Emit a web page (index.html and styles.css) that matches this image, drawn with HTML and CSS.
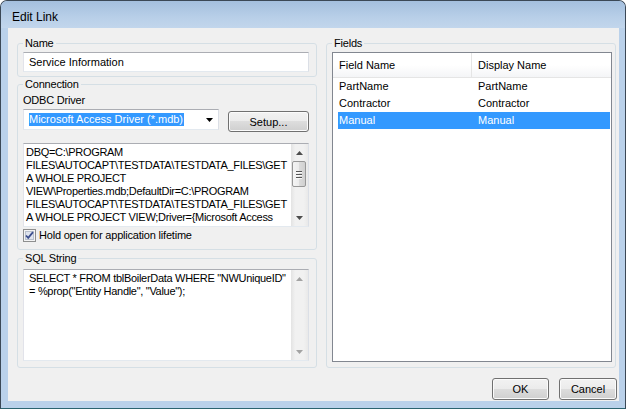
FILE: index.html
```html
<!DOCTYPE html>
<html lang="en">
<head>
    <meta charset="UTF-8">
    <title>Edit Link</title>
    <link rel="stylesheet" href="styles.css">
</head>
<body>
    <div class="window">
        <div class="titlebar">Edit Link</div>

        <div class="client">
            <div class="main">
                <div class="left">
                    <fieldset class="group group-name">
                        <legend>Name</legend>
                        <div class="textbox">Service Information</div>
                    </fieldset>

                    <fieldset class="group group-conn">
                        <legend>Connection</legend>
                        <div class="label">ODBC Driver</div>
                        <div class="driver-row">
                            <div class="combo">
                                <span class="combo-value">Microsoft Access Driver (*.mdb)</span>
                                <svg class="combo-arrow" width="7" height="4" viewBox="0 0 7 4"><path d="M0 0h7L3.5 4z" fill="#000"/></svg>
                            </div>
                            <button class="btn btn-setup">Setup...</button>
                        </div>
                        <div class="memo memo-conn">
                            <div class="memo-text">DBQ=C:\PROGRAM
FILES\AUTOCAPT\TESTDATA\TESTDATA_FILES\GET
A WHOLE PROJECT
VIEW\Properties.mdb;DefaultDir=C:\PROGRAM
FILES\AUTOCAPT\TESTDATA\TESTDATA_FILES\GET
A WHOLE PROJECT VIEW;Driver={Microsoft Access</div>
                            <div class="vscroll">
                                <div class="sb-btn"><svg width="7" height="4" viewBox="0 0 7 4"><path d="M3.5 0L7 4H0z" fill="#4d4d4d"/></svg></div>
                                <div class="sb-thumb"><span></span><span></span><span></span></div>
                                <div class="sb-track"></div>
                                <div class="sb-btn"><svg width="7" height="4" viewBox="0 0 7 4"><path d="M0 0h7L3.5 4z" fill="#4d4d4d"/></svg></div>
                            </div>
                        </div>
                        <label class="check">
                            <svg class="check-box" width="13" height="13" viewBox="0 0 13 13">
                                <rect x="0.5" y="0.5" width="12" height="12" fill="#f4f4f4" stroke="#8e8f8f"/>
                                <rect x="2.5" y="2.5" width="8" height="8" fill="#dfe4ee" stroke="#b8c0cc"/>
                                <path d="M3 6.5l2.2 2.4L10 3.2" fill="none" stroke="#3d4f8e" stroke-width="1.8"/>
                            </svg>
                            <span>Hold open for application lifetime</span>
                        </label>
                    </fieldset>

                    <fieldset class="group group-sql">
                        <legend>SQL String</legend>
                        <div class="memo memo-sql">
                            <div class="memo-text">SELECT * FROM tblBoilerData WHERE "NWUniqueID"
= %prop("Entity Handle", "Value");</div>
                            <div class="vscroll">
                                <div class="sb-btn"><svg width="7" height="4" viewBox="0 0 7 4"><path d="M3.5 0L7 4H0z" fill="#a3a3a3"/></svg></div>
                                <div class="sb-track"></div>
                                <div class="sb-btn"><svg width="7" height="4" viewBox="0 0 7 4"><path d="M0 0h7L3.5 4z" fill="#a3a3a3"/></svg></div>
                            </div>
                        </div>
                    </fieldset>
                </div>

                <div class="right">
                    <fieldset class="group group-fields">
                        <legend>Fields</legend>
                        <div class="listview">
                            <div class="lv-header">
                                <div class="lv-head lv-head-first">Field Name</div>
                                <div class="lv-head">Display Name</div>
                            </div>
                            <div class="lv-row">
                                <div class="lv-cell lv-cell-first">PartName</div>
                                <div class="lv-cell">PartName</div>
                            </div>
                            <div class="lv-row">
                                <div class="lv-cell lv-cell-first">Contractor</div>
                                <div class="lv-cell">Contractor</div>
                            </div>
                            <div class="lv-row selected">
                                <div class="lv-cell lv-cell-first">Manual</div>
                                <div class="lv-cell">Manual</div>
                            </div>
                        </div>
                    </fieldset>
                </div>
            </div>

            <div class="footer">
                <button class="btn btn-ok">OK</button>
                <button class="btn btn-cancel">Cancel</button>
            </div>
        </div>
    </div>
</body>
</html>
```

FILE: styles.css
```css
* {
    margin: 0;
    padding: 0;
    box-sizing: border-box;
    font-family: "Liberation Sans", Arial, sans-serif;
}

body {
    background-color: #ffffff;
    color: #000000;
    font-size: 11px;
}

.window {
    width: 626px;
    height: 409px;
    display: flex;
    flex-direction: column;
    border: 1px solid #3b4856;
    border-bottom-color: #2c6470;
    border-radius: 7px 7px 0 0;
    background-color: #bad1ea;
    overflow: hidden;
}

.titlebar {
    height: 27px;
    padding: 9px 0 0 11px;
    font-size: 12px;
    line-height: 14px;
    color: #000;
    background: linear-gradient(#a4bfde, #b8cfe8 60%, #c2d6ec);
}

.client {
    flex: 1;
    display: flex;
    flex-direction: column;
    margin: 0 6px 7px 7px;
    background-color: #f0f0f0;
}

.main {
    display: flex;
    gap: 9px;
    padding: 9px 0 0 9px;
}

.left {
    width: 300px;
    display: flex;
    flex-direction: column;
}

.right {
    width: 290px;
    display: flex;
    flex-direction: column;
}

/* group boxes */
.group {
    border: 1px solid #d5dfe5;
    border-radius: 3px;
    padding: 2px 7px 4px 5px;
    min-width: 0;
}

.group legend {
    padding: 0 2px;
    font-size: 11px;
    line-height: 13px;
    letter-spacing: -0.2px;
}

.group-conn {
    margin-top: 1px;
    padding: 3px 7px 7px 5px;
}

.group-sql {
    margin-top: 2px;
    padding: 4px 7px 6px 5px;
}

.group-fields {
    flex: 1;
    padding: 2px 3px 5px 5px;
}

.label {
    line-height: 13px;
    letter-spacing: -0.2px;
}

.textbox {
    height: 20px;
    padding-left: 5px;
    line-height: 18px;
    background: #fff;
    border: 1px solid;
    border-color: #abadb3 #dbdfe6 #e3e9ef #e2e3ea;
}

/* driver row */
.driver-row {
    display: flex;
    align-items: flex-start;
    gap: 9px;
    margin-top: 2px;
}

.combo {
    width: 196px;
    height: 21px;
    display: flex;
    align-items: center;
    justify-content: space-between;
    padding: 0 5px 0 5px;
    background: #fff;
    border: 1px solid;
    border-color: #abadb3 #dbdfe6 #e3e9ef #e2e3ea;
}

.combo-value {
    padding: 0 1px 0 0;
    line-height: 13px;
    color: #fff;
    background-color: #3399ff;
}

.btn {
    height: 22px;
    font-size: 11px;
    color: #000;
    border: 1px solid #707070;
    border-radius: 3px;
    background: linear-gradient(#f2f2f2, #ebebeb 50%, #dddddd 50%, #cfcfcf);
    box-shadow: inset 0 0 0 1px #fbfbfb;
}

.btn-setup {
    width: 81px;
    height: 21px;
    margin-top: 2px;
}

/* multi-line text boxes */
.memo {
    display: flex;
    background: #fff;
    border: 1px solid;
    border-color: #abadb3 #dbdfe6 #e3e9ef #e2e3ea;
    overflow: hidden;
}

.memo-conn {
    height: 84px;
    margin-top: 11px;
}

.memo-sql {
    height: 92px;
}

.memo-text {
    flex: 1;
    white-space: pre;
    overflow: hidden;
    line-height: 13px;
    letter-spacing: -0.3px;
}

.memo-conn .memo-text {
    padding: 2px 0 0 2px;
}

.memo-sql .memo-text {
    padding: 2px 0 0 5px;
}

.vscroll {
    width: 17px;
    display: flex;
    flex-direction: column;
    background: linear-gradient(to right, #e3e3e3, #f1f1f1 25%, #f1f1f1 75%, #e9e9e9);
}

.sb-btn {
    height: 17px;
    display: flex;
    align-items: center;
    justify-content: center;
}

.sb-thumb {
    height: 26px;
    margin: 0 2px 0 1px;
    display: flex;
    flex-direction: column;
    align-items: center;
    justify-content: center;
    gap: 2px;
    border: 1px solid #979797;
    border-radius: 2px;
    background: linear-gradient(to right, #f4f4f4, #ececec 50%, #dcdcdc 50%, #d0d0d0);
}

.sb-thumb span {
    width: 6px;
    height: 1px;
    background-color: #555;
    box-shadow: 0 1px 0 #f8f8f8;
}

.sb-track {
    flex: 1;
}

.check {
    display: flex;
    align-items: center;
    gap: 3px;
    margin-top: 2px;
    height: 13px;
    line-height: 13px;
    letter-spacing: -0.2px;
}

/* list view */
.listview {
    height: 310px;
    background: #fff;
    border: 1px solid #828790;
}

.lv-header {
    display: flex;
    height: 25px;
    border-bottom: 1px solid #e5e5e5;
    background: linear-gradient(#ffffff, #ffffff 50%, #f4f5f7);
}

.lv-head {
    display: flex;
    align-items: center;
    padding-left: 6px;
    color: #000;
}

.lv-head-first {
    width: 139px;
    border-right: 1px solid #e5e5e5;
}

.lv-row {
    display: flex;
    height: 17px;
    margin: 0 1px 0 5px;
    padding-left: 1px;
    line-height: 17px;
}

.lv-cell-first {
    width: 139px;
}

.lv-row.selected {
    color: #fff;
    background-color: #3399ff;
}

/* buttons at the bottom */
.footer {
    display: flex;
    justify-content: flex-end;
    gap: 10px;
    margin-top: 10px;
    padding-right: 2px;
}

.btn-ok {
    width: 57px;
}

.btn-cancel {
    width: 58px;
}
```
